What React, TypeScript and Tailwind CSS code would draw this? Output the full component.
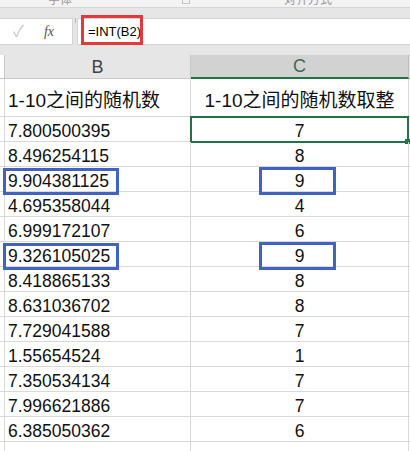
import React from 'react';

const rows: [string, string][] = [
  ['7.800500395', '7'],
  ['8.496254115', '8'],
  ['9.904381125', '9'],
  ['4.695358044', '4'],
  ['6.999172107', '6'],
  ['9.326105025', '9'],
  ['8.418865133', '8'],
  ['8.631036702', '8'],
  ['7.729041588', '7'],
  ['1.55654524', '1'],
  ['7.350534134', '7'],
  ['7.996621886', '7'],
  ['6.385050362', '6'],
];

const font = { fontFamily: '"Liberation Sans", "Noto Sans CJK SC", sans-serif' };

export default function App() {
  return (
    <div className="relative w-[410px] h-[451px] overflow-hidden bg-white text-black" style={font}>
      {/* ribbon bottom edge */}
      <div className="h-[7px] bg-[#f3f3f3] overflow-hidden flex text-[12px] text-[#9a9a9a] leading-none">
        <span className="ml-[48px] -mt-[6px]">字体</span>
        <span className="ml-[110px] -mt-[4px] w-[8px] h-[8px] border border-[#c4c4c4]" />
        <span className="ml-[94px] -mt-[6px]">对齐方式</span>
      </div>
      <div className="h-[11px] bg-[#e6e6e6] border-t border-[#d6d6d6]" />

      {/* formula bar */}
      <div className="h-[27px] flex bg-[#e6e6e6]">
        <div className="w-[73px] bg-white border border-l-0 border-[#d4d4d4] flex items-center">
          <span className="ml-[13px] text-[16px] text-[#cacaca]">✓</span>
          <span
            className="ml-[20px] text-[14px] italic text-[#555]"
            style={{ fontFamily: '"Liberation Serif", serif' }}
          >
            fx
          </span>
        </div>
        <div className="w-[4px] flex items-start justify-center">
          <div className="w-[1px] h-[5px] bg-[#b8b8b8]" />
        </div>
        <div className="flex-1 bg-white border border-r-0 border-[#d4d4d4] flex items-center pl-[10px] text-[13px]">
          =INT(B2)
        </div>
      </div>
      <div className="h-[10px] bg-[#e6e6e6]" />

      {/* column headers */}
      <div className="h-[24px] flex bg-[#e6e6e6] text-[18px] leading-none">
        <div className="w-[5px] bg-white border-r border-b border-[#c8c8c8]" />
        <div className="w-[186px] border-r border-b border-[#c8c8c8] flex items-center justify-center text-[#444]">
          B
        </div>
        <div className="w-[218px] bg-[#d2d2d2] border-r border-[#bcbcbc] border-b-2 border-b-[#217346] flex items-center justify-center text-[#3e6a50]">
          C
        </div>
        <div className="flex-1 border-b border-[#c8c8c8]" />
      </div>

      {/* header row */}
      <div className="h-[38px] flex border-b border-[#d9d9d9] text-[19px] leading-none text-[#111]">
        <div className="w-[5px] border-r border-[#d9d9d9]" />
        <div className="w-[186px] border-r border-[#d9d9d9] flex items-end pl-[3px] pb-[6px]">
          1-10之间的随机数
        </div>
        <div className="w-[218px] border-r border-[#d9d9d9] flex items-end justify-center pb-[6px]">
          1-10之间的随机数取整
        </div>
        <div className="flex-1" />
      </div>

      {/* data rows */}
      {rows.map(([b, c], i) => {
        const marked = i === 2 || i === 5;
        return (
          <div key={i} className="h-[25px] flex border-b border-[#d9d9d9] text-[17.5px] leading-none text-[#111]">
            <div className="w-[5px] border-r border-[#d9d9d9]" />
            <div className="relative w-[186px] border-r border-[#d9d9d9] flex items-end pl-[3px] pb-[1px]">
              {b}
              {marked && (
                <div className="absolute left-[-2px] top-[1px] w-[116px] h-[27px] border-[3px] border-[#4262c0]" />
              )}
            </div>
            <div className="relative w-[218px] border-r border-[#d9d9d9] flex items-end justify-center pb-[1px]">
              {c}
              {i === 0 && (
                <>
                  <div className="absolute -left-[1px] -top-[1px] -right-[1px] h-[27px] border-2 border-[#217346]" />
                  <div className="absolute -right-[2px] top-[22px] w-[5px] h-[5px] bg-[#217346]" />
                </>
              )}
              {marked && (
                <div className="absolute left-[68px] top-[0px] w-[77px] h-[28px] border-[3px] border-[#4262c0]" />
              )}
            </div>
            <div className="flex-1" />
          </div>
        );
      })}
      <div className="h-[9px] flex">
        <div className="w-[5px] border-r border-[#d9d9d9]" />
        <div className="w-[186px] border-r border-[#d9d9d9]" />
        <div className="w-[218px] border-r border-[#d9d9d9]" />
      </div>

      {/* formula annotation */}
      <div className="absolute left-[81px] top-[15px] w-[62px] h-[30px] border-[3px] border-[#e23a3a]" />
    </div>
  );
}
